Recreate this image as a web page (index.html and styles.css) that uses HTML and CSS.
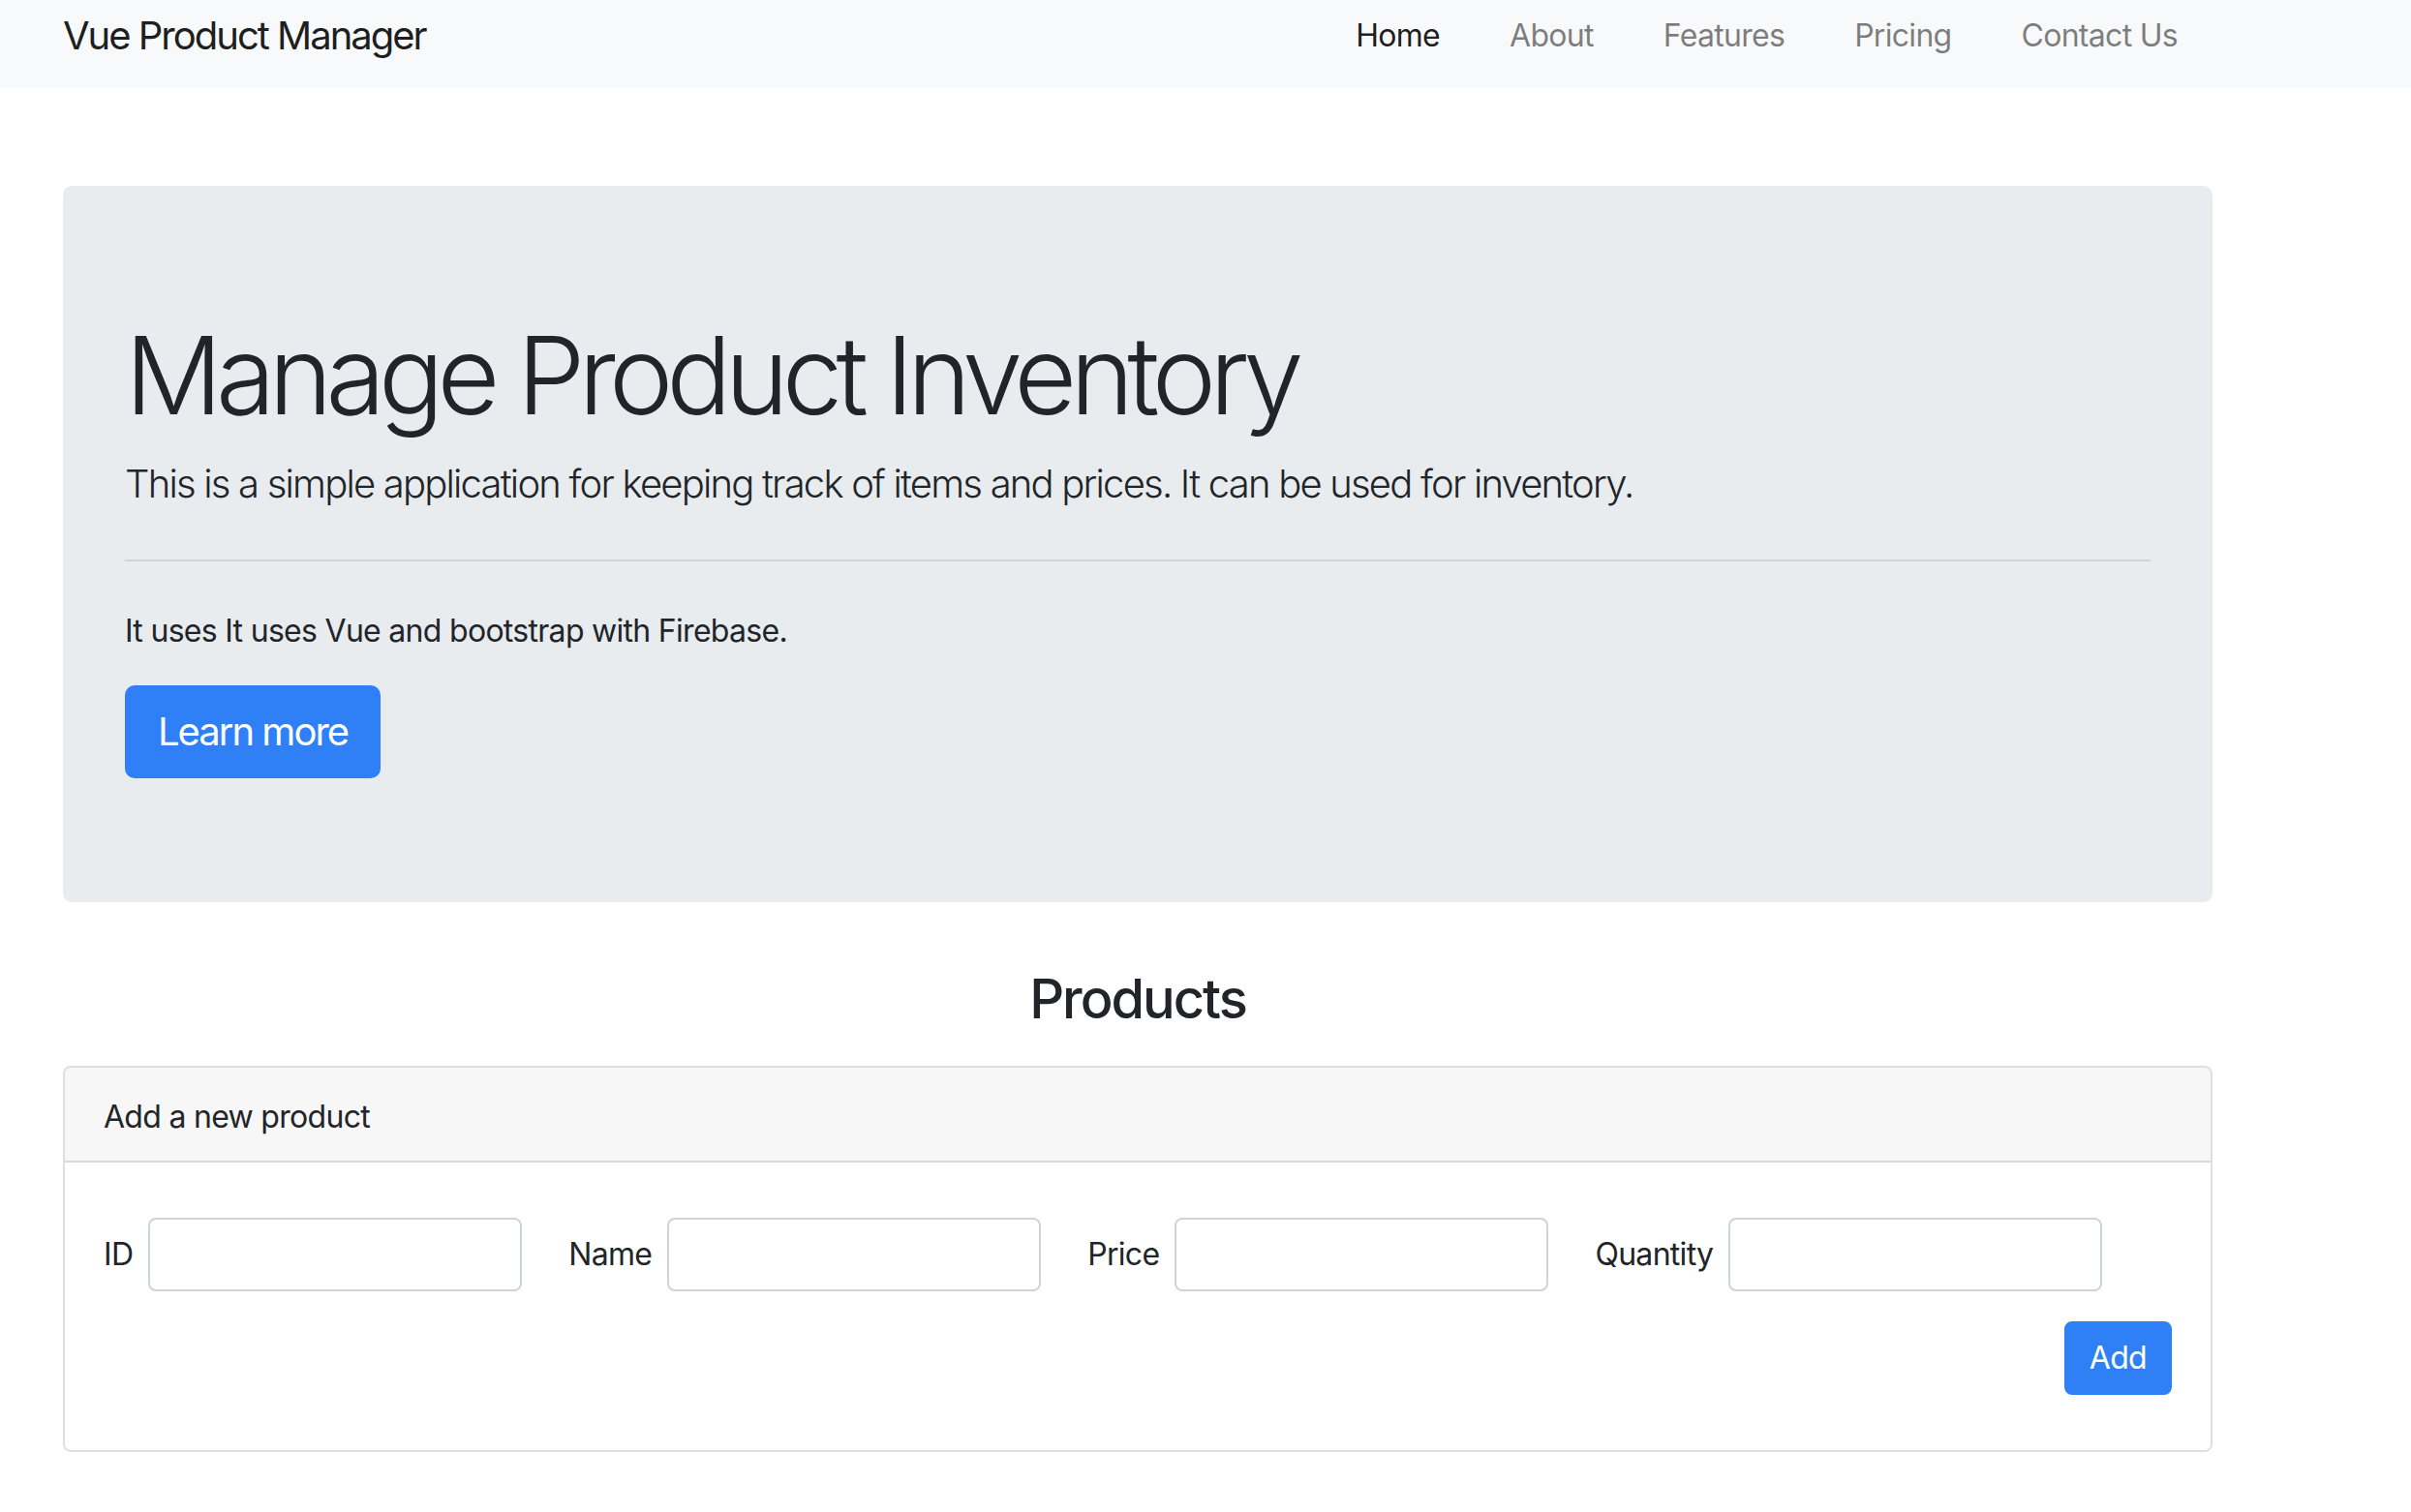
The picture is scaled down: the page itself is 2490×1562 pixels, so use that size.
FILE: index.html
```html
<!DOCTYPE html>
<html lang="en">
<head>
<meta charset="utf-8">
<title>Vue Product Manager</title>
<link rel="stylesheet" href="styles.css">
</head>
<body>
<nav class="navbar">
  <a class="brand" href="#">Vue Product Manager</a>
  <ul class="nav-links">
    <li><a class="nav-link active" href="#">Home</a></li>
    <li><a class="nav-link" href="#">About</a></li>
    <li><a class="nav-link" href="#">Features</a></li>
    <li><a class="nav-link" href="#">Pricing</a></li>
    <li><a class="nav-link" href="#">Contact Us</a></li>
  </ul>
</nav>
<main class="container">
  <section class="jumbotron">
    <h1 class="display">Manage Product Inventory</h1>
    <p class="lead">This is a simple application for keeping track of items and prices. It can be used for inventory.</p>
    <hr class="divider">
    <p class="body-text">It uses It uses Vue and bootstrap with Firebase.</p>
    <a class="btn btn-lg" href="#">Learn more</a>
  </section>
  <h3 class="section-title">Products</h3>
  <div class="card">
    <div class="card-header">Add a new product</div>
    <div class="card-body">
      <form class="form-inline">
        <label class="field-label" for="pid">ID</label>
        <input class="form-control" id="pid" type="text">
        <label class="field-label" for="pname">Name</label>
        <input class="form-control" id="pname" type="text">
        <label class="field-label" for="pprice">Price</label>
        <input class="form-control" id="pprice" type="text">
        <label class="field-label" for="pqty">Quantity</label>
        <input class="form-control" id="pqty" type="text">
      </form>
      <div class="actions">
        <button class="btn btn-sm" type="button">Add</button>
      </div>
    </div>
  </div>
</main>
</body>
</html>
```

FILE: styles.css
```css
* { box-sizing: border-box; }
html, body { margin: 0; padding: 0; }
body {
  font-family: Inter, "Liberation Sans", Arial, sans-serif;
  font-size: 32px;
  line-height: 1.5;
  letter-spacing: -0.022em;
  color: #212529;
  background: #ffffff;
}
a { text-decoration: none; }

.navbar {
  height: 91px;
  background: #f8f9fa;
  display: flex;
  align-items: center;
  justify-content: space-between;
  padding: 0 205px 17px 65px;
}
.brand {
  font-size: 40px;
  line-height: 1.5;
  letter-spacing: -0.05em;
  color: rgba(0,0,0,.9);
}
.nav-links {
  display: flex;
  list-style: none;
  margin: 0;
  padding: 0;
}
.nav-link {
  display: block;
  padding: 0 36px;
  font-size: 32px;
  color: rgba(0,0,0,.5);
}
.nav-link.active { color: rgba(0,0,0,.9); }

.container {
  margin: 0 205px 0 65px;
}

.jumbotron {
  margin-top: 101px;
  background: #e9ecef;
  border-radius: 9px;
  padding: 128px 64px;
}
.display {
  margin: 0 0 16px;
  font-size: 112px;
  font-weight: 300;
  line-height: 1.2;
  letter-spacing: -0.062em;
}
.lead {
  margin: 0;
  font-size: 40px;
  font-weight: 300;
  line-height: 1.5;
  letter-spacing: -0.045em;
}
.divider {
  margin: 48px 0;
  border: 0;
  border-top: 2px solid rgba(0,0,0,.1);
  height: 0;
}
.body-text {
  margin: 0 0 32px;
}
.btn {
  display: inline-block;
  background: #2f80f6;
  color: #fff;
  border: 2px solid #2f80f6;
  border-radius: 8px;
  font-family: inherit;
  line-height: 1.5;
  letter-spacing: -0.022em;
}
.btn-lg {
  font-size: 40px;
  padding: 16px 32px;
  border-radius: 10px;
  letter-spacing: -0.05em;
}
.btn-sm {
  font-size: 32px;
  padding: 12px 24px;
}

.section-title {
  margin: 67px 0 34px;
  text-align: center;
  font-size: 56px;
  font-weight: 500;
  line-height: 1.2;
  letter-spacing: -0.036em;
}

.card {
  border: 2px solid rgba(0,0,0,.125);
  border-radius: 8px;
  overflow: hidden;
}
.card-header {
  background: rgba(0,0,0,.03);
  border-bottom: 2px solid rgba(0,0,0,.125);
  padding: 27px 40px 21px;
  line-height: 48px;
}
.card-body {
  padding: 57px 40px 57px;
}
.form-inline {
  display: flex;
  align-items: center;
}
.field-label {
  margin-right: 16px;
}
.form-control {
  width: 386px;
  height: 76px;
  margin-right: 48px;
  border: 2px solid #ced4da;
  border-radius: 8px;
  background: #fff;
  font-size: 32px;
  padding: 12px 24px;
}
.actions {
  display: flex;
  justify-content: flex-end;
  margin-top: 31px;
}
```
